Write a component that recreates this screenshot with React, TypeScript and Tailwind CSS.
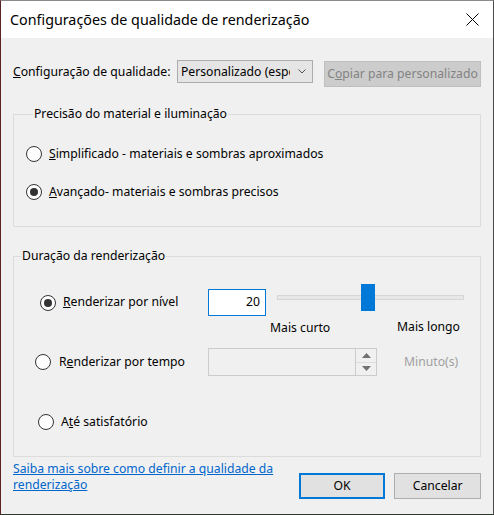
import React from "react";

function Radio({ checked }: { checked?: boolean }) {
  return (
    <span className="w-[16px] h-[16px] rounded-full border border-[#333333] bg-white flex items-center justify-center shrink-0">
      {checked && <span className="w-[8px] h-[8px] rounded-full bg-[#333333]" />}
    </span>
  );
}

export default function App() {
  return (
    <div className="w-[494px] h-[515px] bg-[#f0f0f0] border-t border-t-[#8a8a8a] border-r border-r-[#4a4a4a] border-l border-l-[#5a2424] border-b border-b-[#2f3a2f] flex flex-col overflow-hidden font-['Noto_Sans',sans-serif] text-[12.2px] text-black">
      {/* Title bar */}
      <div className="h-[37px] bg-white flex items-center justify-between pl-[9px] pr-[14px] shrink-0">
        <span className="text-[14.3px] leading-[20px] text-black">Configurações de qualidade de renderização</span>
        <svg width="13" height="13" viewBox="0 0 13 13" className="block">
          <path d="M0.5 0.5 L12.5 12.5 M12.5 0.5 L0.5 12.5" stroke="#000" strokeWidth="1" fill="none" />
        </svg>
      </div>

      {/* Body */}
      <div className="flex-1 flex flex-col px-[12px]">
        {/* Row 1 */}
        <div className="flex items-start mt-[22px]">
          <span className="w-[165px] h-[23px] leading-[23px] whitespace-nowrap">
            <span className="underline">C</span>onfiguração de qualidade:
          </span>
          <div className="w-[137px] h-[23px] border border-[#acacac] bg-[#e5e5e5] flex items-center pl-[3px] pr-[6px] overflow-hidden">
            <span className="flex-1 overflow-hidden whitespace-nowrap leading-[21px]">Personalizado (especificado pelo usuário)</span>
            <svg width="8" height="5" viewBox="0 0 8 5" className="ml-[8px] shrink-0">
              <path d="M0.5 0.5 L4 4 L7.5 0.5" stroke="#555" strokeWidth="1" fill="none" />
            </svg>
          </div>
          <div className="ml-[11px] mt-[1px] w-[158px] h-[26px] border border-[#bfbfbf] bg-[#cccccc] text-[#838383] flex items-center justify-center whitespace-nowrap">
            <span>
              C<span className="underline">o</span>piar para personalizado
            </span>
          </div>
        </div>

        {/* Group 1 */}
        <fieldset className="mt-[19px] w-[468px] border border-[#dcdcdc] pl-[12px] pb-[24px]">
          <legend className="ml-[7px] px-[1px] leading-[16px]">Precisão do material e iluminação</legend>
          <div className="flex items-center h-[20px] mt-[22px]">
            <Radio />
            <span className="ml-[7px] leading-[20px]">
              <span className="underline">S</span>implificado - materiais e sombras aproximados
            </span>
          </div>
          <div className="flex items-center h-[20px] mt-[18px]">
            <Radio checked />
            <span className="ml-[7px] leading-[20px]">
              <span className="underline">A</span>vançado- materiais e sombras precisos
            </span>
          </div>
        </fieldset>

        {/* Group 2 */}
        <fieldset className="mt-[21px] w-[468px] border border-[#dcdcdc] pb-[24px]">
          <legend className="ml-[7px] px-[1px] leading-[16px]">Duração da renderização</legend>

          {/* Row A */}
          <div className="flex items-start mt-[20px] pl-[26px] h-[32px]">
            <div className="w-[168px] h-[27px] mt-[5px] flex items-center">
              <Radio checked />
              <span className="ml-[7px] whitespace-nowrap">
                <span className="underline">R</span>enderizar por nível
              </span>
            </div>
            <div className="w-[58px] h-[27px] mt-[5px] border border-[#0078d7] bg-white flex items-center justify-end pr-[5px]">
              20
            </div>
            <div className="relative ml-[11px] w-[187px] h-[27px]">
              <div className="absolute left-0 right-0 top-[11px] h-[5px] border border-[#d6d6d6] bg-[#e7e7e7]" />
              <div className="absolute left-[84px] top-0 w-[14px] h-[27px] bg-[#0078d7]" />
            </div>
          </div>

          {/* Slider labels */}
          <div className="flex items-center mt-[4px] h-[16px] pl-[256px] leading-[16px]">
            <span className="w-[127px]">Mais curto</span>
            <span className="-mt-[2px]">Mais longo</span>
          </div>

          {/* Row B */}
          <div className="flex items-start mt-[12px] pl-[21px] h-[28px]">
            <div className="w-[173px] h-[28px] flex items-center">
              <Radio />
              <span className="ml-[8px] whitespace-nowrap">
                R<span className="underline">e</span>nderizar por tempo
              </span>
            </div>
            <div className="w-[169px] h-[28px] border border-[#cccccc] bg-[#f0f0f0] flex justify-end">
              <div className="w-[21px] h-full border-l border-l-[#cccccc] flex flex-col">
                <div className="flex-1 flex items-center justify-center border-b border-b-[#dcdcdc]">
                  <svg width="9" height="5" viewBox="0 0 9 5">
                    <path d="M0 5 L4.5 0 L9 5 Z" fill="#707070" />
                  </svg>
                </div>
                <div className="flex-1 flex items-center justify-center">
                  <svg width="9" height="5" viewBox="0 0 9 5">
                    <path d="M0 0 L4.5 5 L9 0 Z" fill="#707070" />
                  </svg>
                </div>
              </div>
            </div>
            <span className="ml-[27px] h-[28px] leading-[28px] text-[#a0a0a0]">Minuto(s)</span>
          </div>

          {/* Row C */}
          <div className="flex items-center mt-[36px] pl-[24px] h-[20px]">
            <Radio />
            <span className="ml-[7px]">
              A<span className="underline">t</span>é satisfatório
            </span>
          </div>
        </fieldset>

        {/* Bottom */}
        <div className="flex items-start">
          <a className="mt-[4px] w-[272px] leading-[16px] text-[#0066cc] underline cursor-pointer">
            Saiba mais sobre como definir a qualidade da renderização
          </a>
          <div className="ml-[15px] mt-[16px] w-[87px] h-[26px] border-2 border-[#0078d7] bg-[#e1e1e1] flex items-center justify-center">
            OK
          </div>
          <div className="ml-[9px] mt-[16px] w-[87px] h-[26px] border border-[#adadad] bg-[#e1e1e1] flex items-center justify-center">
            Cancelar
          </div>
        </div>
      </div>
    </div>
  );
}
